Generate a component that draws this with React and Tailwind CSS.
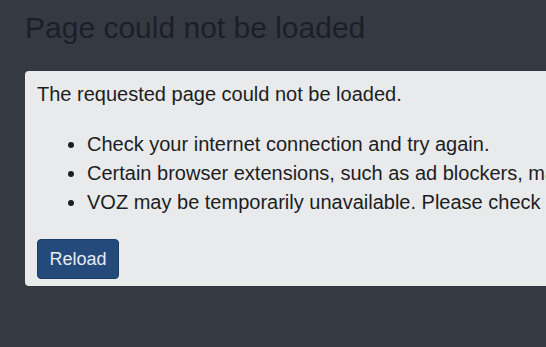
export default function App() {
  return (
    <div className="w-[546px] h-[347px] overflow-hidden bg-[#353a42] font-['Liberation_Sans',Arial,sans-serif]">
      <div className="w-[1000px] pl-[25px] pt-[10px]">
        <h1 className="text-[30px] leading-[36px] text-[#1c1f25]">Page could not be loaded</h1>
        <div className="mt-[25px] bg-[#e9eaec] rounded-[4px] px-[12px] pt-[9px] pb-[7px] text-[20px] leading-[29px] text-[#1c1e22] whitespace-nowrap">
          <p>The requested page could not be loaded.</p>
          <ul className="list-disc pl-[50px] mt-[21px]">
            <li>Check your internet connection and try again.</li>
            <li>Certain browser extensions, such as ad blockers, may block pages unexpectedly. Disable these and try again.</li>
            <li>VOZ may be temporarily unavailable. Please check back later.</li>
          </ul>
          <button className="mt-[22px] h-[40px] w-[82px] rounded-[4px] bg-[#234a7b] text-[#e6ecf3] text-[18px] border border-[#1b3c66]">
            Reload
          </button>
        </div>
      </div>
    </div>
  );
}
